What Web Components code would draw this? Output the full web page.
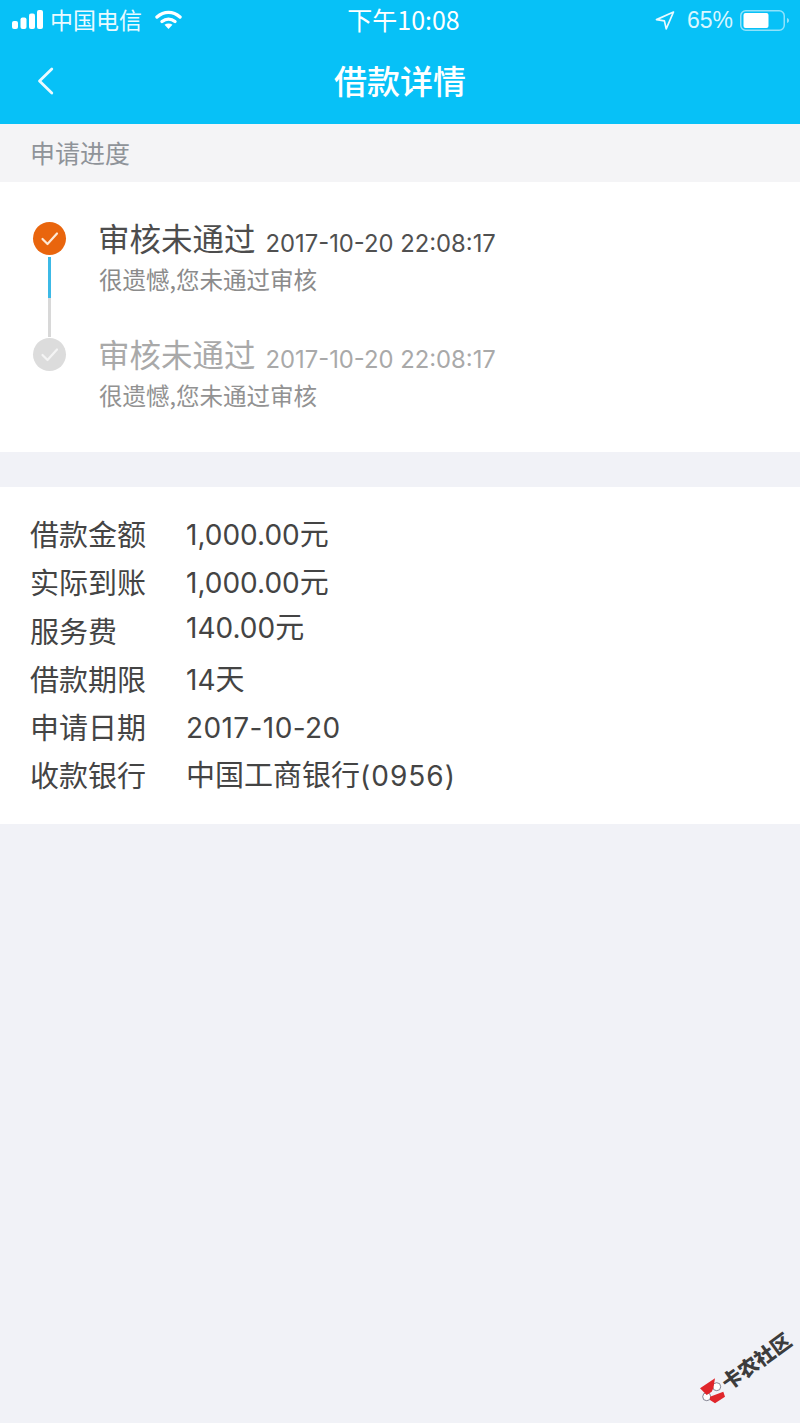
<!DOCTYPE html>
<html lang="zh">
<head>
<meta charset="utf-8">
<title>借款详情</title>
<style>
  html, body { margin: 0; padding: 0; background: #f1f2f7; }
  body { width: 800px; height: 1423px; overflow: hidden; font-family: "Noto Sans CJK SC", "Liberation Sans", sans-serif; }
  loan-page { height: 1423px; }
</style>
</head>
<body>
<loan-page>
  <status-bar></status-bar>
  <nav-bar title="借款详情"></nav-bar>
  <section-label>申请进度</section-label>
  <progress-card>
    <progress-step state="done" title="审核未通过" time="2017-10-20 22:08:17" note="很遗憾,您未通过审核"></progress-step>
    <progress-step state="muted" title="审核未通过" time="2017-10-20 22:08:17" note="很遗憾,您未通过审核"></progress-step>
  </progress-card>
  <detail-card>
    <detail-row label="借款金额" value="1,000.00元"></detail-row>
    <detail-row label="实际到账" value="1,000.00元"></detail-row>
    <detail-row label="服务费" value="140.00元" nudge></detail-row>
    <detail-row label="借款期限" value="14天"></detail-row>
    <detail-row label="申请日期" value="2017-10-20" track=".4px"></detail-row>
    <detail-row label="收款银行" value="中国工商银行(0956)" track="1px"></detail-row>
  </detail-card>
  <water-mark></water-mark>
</loan-page>

<script>
const CJK = '"Noto Sans CJK SC", "Liberation Sans", sans-serif';
const LATIN = '"Inter", "Noto Sans CJK SC", sans-serif';

function define(name, css, html) {
  customElements.define(name, class extends HTMLElement {
    constructor() {
      super();
      this.attachShadow({ mode: 'open' });
    }
    connectedCallback() {
      const markup = typeof html === 'function' ? html(this) : html;
      this.shadowRoot.innerHTML = `<style>${css}</style>${markup}`;
    }
  });
}

define('loan-page', `
  :host { display: flex; flex-direction: column; position: relative; width: 800px; background: #f1f2f7; overflow: hidden; }
`, `<slot></slot>`);

define('status-bar', `
  :host { display: flex; align-items: center; height: 40px; padding: 0 10px 0 12px; background: #07c1f7; color: #eafaff; font: 23px ${CJK}; position: relative; box-sizing: border-box; }
  .left { display: flex; align-items: center; }
  .carrier { margin-left: 7px; line-height: 38px; margin-top: -2px; }
  .signal { margin-top: -1px; }
  .wifi { margin-left: 13px; margin-top: -1px; }
  .clock { position: absolute; left: 7px; right: 0; top: -1px; text-align: center; font-size: 25px; line-height: 40px; color: #fff; }
  .right { margin-left: auto; display: flex; align-items: center; }
  .pct { font: 23px/38px "Liberation Sans", sans-serif; margin: -1px 7px 0 12px; color: #d8f6ff; }
`, `
  <div class="left">
    <svg class="signal" width="31" height="19" viewBox="0 0 31 19"><g fill="#fff"><rect x="0" y="11" width="6" height="8" rx="2"/><rect x="8.500" y="7.500" width="6" height="11.500" rx="2"/><rect x="17" y="3.500" width="6" height="15.500" rx="2"/><rect x="25" y="0" width="6" height="19" rx="2"/></g></svg>
    <span class="carrier">中国电信</span>
    <svg class="wifi" width="27" height="19" viewBox="0 0 27 19"><path d="M2 7C9 .8 18 .8 25 7" fill="none" stroke="#fff" stroke-width="3.400" stroke-linecap="round"/><path d="M7 11.500C11 8.300 16 8.300 20 11.500" fill="none" stroke="#fff" stroke-width="3.400" stroke-linecap="round"/><path d="M13.500 19l-4-4.200c2.400-1.600 5.600-1.600 8 0z" fill="#fff"/></svg>
  </div>
  <span class="clock">下午10:08</span>
  <div class="right">
    <svg width="20" height="19" viewBox="0 0 20 19"><path d="M18.500 1 1.500 8.600l7.900 1.300 1.800 8z" fill="none" stroke="#eafaff" stroke-width="1.700" stroke-linejoin="round"/></svg>
    <span class="pct">65%</span>
    <svg width="50" height="21" viewBox="0 0 50 21"><rect x=".75" y=".75" width="43.500" height="19.500" rx="5" fill="none" stroke="#8fe2fb" stroke-width="1.500"/><rect x="3.500" y="3" width="25" height="15" rx="2" fill="#fff"/><path d="M47 8c1.500.4 2 1.300 2 2.500s-.5 2.100-2 2.500z" fill="#8fe2fb"/></svg>
  </div>
`);

define('nav-bar', `
  :host { display: flex; align-items: center; justify-content: center; position: relative; height: 84px; background: #07c1f7; color: #fff; }
  .title { font: 500 33px/84px ${CJK}; margin-top: -4px; }
  svg { position: absolute; left: 36px; top: 27px; }
`, host => `
  <svg width="19" height="28" viewBox="0 0 19 28"><path d="M15.800 2 3.500 14 15.800 26" fill="none" stroke="#eafaff" stroke-width="2.800" stroke-linecap="round" stroke-linejoin="round"/></svg>
  <span class="title">${host.getAttribute('title')}</span>
`);

define('section-label', `
  :host { display: block; height: 58px; padding-left: 30px; background: #f4f4f6; color: #8f9399; font: 25px/56px ${CJK}; }
`, `<slot></slot>`);

define('progress-card', `
  :host { display: flex; flex-direction: column; height: 270px; padding-top: 32px; box-sizing: border-box; background: #fff; }
`, `<slot></slot>`);

define('progress-step', `
  :host { display: grid; grid-template-columns: 33px 1fr; column-gap: 33px; height: 116px; padding-left: 33px; position: relative; }
  .dot { width: 33px; height: 33px; margin-top: 8px; border-radius: 50%; background: #e9650d; }
  .dot svg { display: block; }
  .line { position: absolute; left: 48px; top: 43px; width: 3px; height: 80px; background: linear-gradient(#3cb9e6 0 41px, #d8d8d8 41px); }
  :host([state=muted]) .line { display: none; }
  :host([state=muted]) .dot { background: #dcdcdc; }
  .head { display: flex; align-items: baseline; height: 48px; }
  .title { font: 31.500px/46px ${CJK}; color: #4d4d4d; margin-left: -1px; }
  .time { font: 23.800px/46px ${LATIN}; color: #505050; margin-left: 10px; transform: translateY(1px); }
  .note { font: 23.500px/34px ${CJK}; color: #8b8b8b; }
  :host([state=muted]) .title, :host([state=muted]) .time { color: #a9a9a9; }
  :host([state=muted]) .note { color: #929292; }
`, host => `
  <div class="dot"><svg width="33" height="33" viewBox="0 0 33 33"><path d="M9.500 17l5 5 9.500-10.500" fill="none" stroke="${host.getAttribute('state') === 'done' ? '#fde9d6' : '#f4f4f4'}" stroke-width="2.200" stroke-linecap="round" stroke-linejoin="round"/></svg></div>
  <div class="line"></div>
  <div class="body">
    <div class="head"><span class="title">${host.getAttribute('title')}</span><span class="time">${host.getAttribute('time')}</span></div>
    <div class="note">${host.getAttribute('note')}</div>
  </div>
`);

define('detail-card', `
  :host { display: flex; flex-direction: column; margin-top: 35px; height: 337px; padding-top: 24px; box-sizing: border-box; background: #fff; }
`, `<slot></slot>`);

define('detail-row', `
  :host { display: flex; height: 48.300px; padding-left: 30px; color: #444; font: 29px/48px ${CJK}; }
  .label { width: 156px; flex: none; line-height: 44px; }
  .value { font-family: ${LATIN}; font-size: 28px; }
  .value i { font: normal 29px/0 ${CJK}; letter-spacing: 0; }
  :host([nudge]) .value { margin-top: -4px; }
`, host => `
  <span class="label">${host.getAttribute('label')}</span>
  <span class="value" style="letter-spacing:${host.getAttribute('track') || 0}">${host.getAttribute('value').replace(/[\u4e00-\u9fff]+/g, '<i>$&</i>')}</span>
`);

define('water-mark', `
  :host { position: absolute; left: 694px; top: 1328px; width: 104px; height: 84px; }
  .text { position: absolute; left: 22px; top: 20px; transform: rotate(-36deg); font: 900 20px/26px ${CJK}; color: #3c3c3c; white-space: nowrap; }
  svg { position: absolute; left: 5px; top: 49px; }
`, `
  <svg width="27" height="27" viewBox="0 0 27 27"><circle cx="17.700" cy="9.700" r="4" fill="#fff" stroke="#667" stroke-width=".8"/><circle cx="7.700" cy="19.700" r="4" fill="#fff" stroke="#667" stroke-width=".8"/><path d="M1 11.300 16 1.300l-1.700 10-1.600 3.400-5 3.300zM11 19.700 24.300 14.700 26 19.700 16 26.300 11 23z" fill="#e0262b"/></svg>
  <span class="text">卡农社区</span>
`);
</script>
</body>
</html>
